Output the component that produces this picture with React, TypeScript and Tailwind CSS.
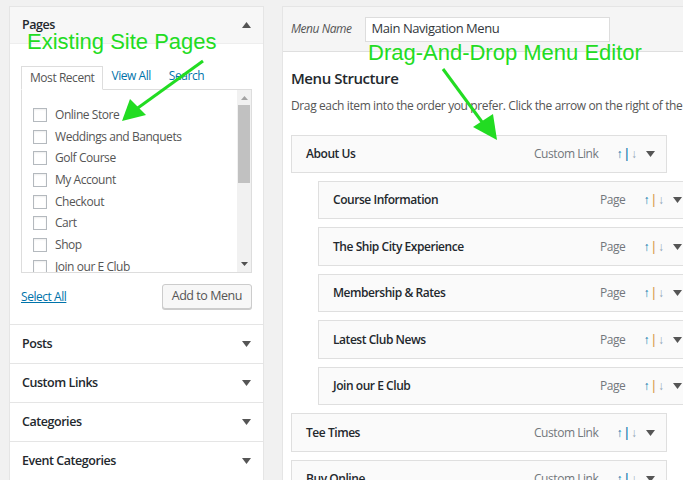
import React from 'react';

const pages = [
  'Online Store',
  'Weddings and Banquets',
  'Golf Course',
  'My Account',
  'Checkout',
  'Cart',
  'Shop',
  'Join our E Club',
];

const sections = ['Posts', 'Custom Links', 'Categories', 'Event Categories'];

interface MenuItemProps {
  title: string;
  kind: string;
  sub?: boolean;
}

function Caret({ up = false }: { up?: boolean }) {
  return (
    <svg width="9" height="6" viewBox="0 0 9 6" className="shrink-0">
      {up ? <polygon points="0,6 9,6 4.5,0" fill="#555" /> : <polygon points="0,0 9,0 4.5,6" fill="#555" />}
    </svg>
  );
}

function MenuItem({ title, kind, sub = false }: MenuItemProps) {
  return (
    <div
      className={`flex items-center h-[38.3px] w-[376px] shrink-0 bg-[#fafafa] border border-[#dfdfdf] pl-[14px] pr-[11px] ${
        sub ? 'ml-[27px]' : ''
      }`}
    >
      <span className="flex-1 text-[12px] font-semibold text-[#23282d]">{title}</span>
      <span className="text-[12px] text-[#72777c]">{kind}</span>
      <span className="ml-[18px] text-[12px] flex items-center tracking-normal">
        <span className="text-[#0073aa]">↑</span>
        <span className={sub ? 'text-[#d69a4c] font-semibold mx-[1px]' : 'text-[#0073aa] font-semibold mx-[1px]'}>|</span>
        <span className="text-[#8fa5b8]">↓</span>
      </span>
      <span className="ml-[9px]">
        <Caret />
      </span>
    </div>
  );
}

export default function App() {
  return (
    <div className="relative w-[683px] h-[480px] overflow-hidden bg-[#f1f1f1] font-['Open_Sans',sans-serif] tracking-[-0.45px] flex items-start">
      {/* left column */}
      <div className="ml-[9px] mt-[6px] w-[255px] shrink-0">
        <div className="border border-[#e5e5e5] bg-white">
          <div className="h-[37px] flex items-center justify-between pl-[12px] pr-[12px] bg-[#f7f7f7] border-b border-[#eeeeee]">
            <span className="text-[12.5px] font-semibold text-[#23282d]">Pages</span>
            <Caret up />
          </div>
          <div className="pt-[22px] pb-[15px] px-[11px]">
            <div className="flex items-end text-[12px] h-[23px]">
              <div className="h-[24px] px-[8px] flex items-center border border-[#dddddd] border-b-white bg-white text-[#555] relative top-[1px]">
                Most Recent
              </div>
              <span className="ml-[8px] mb-[4px] text-[#0073aa]">View All</span>
              <span className="ml-[18px] mb-[4px] text-[#0073aa]">Search</span>
            </div>
            <div className="h-[184px] border border-[#dddddd] flex">
              <div className="flex-1 overflow-hidden pt-[14px] pl-[11px]">
                {pages.map((p) => (
                  <div key={p} className="h-[21.7px] flex items-center">
                    <span className="w-[14px] h-[14px] border border-[#b4b9be] bg-white shadow-[inset_0_1px_2px_rgba(0,0,0,0.07)] shrink-0" />
                    <span className="ml-[8px] text-[12px] text-[#555]">{p}</span>
                  </div>
                ))}
              </div>
              <div className="w-[14px] bg-[#f1f1f1] flex flex-col items-center">
                <svg width="7" height="4" viewBox="0 0 7 4" className="mt-[6px]">
                  <polygon points="0,4 7,4 3.5,0" fill="#a3a3a3" />
                </svg>
                <div className="mt-[5px] w-[12px] h-[78px] bg-[#c1c1c1]" />
                <svg width="7" height="4" viewBox="0 0 7 4" className="mt-auto mb-[6px]">
                  <polygon points="0,0 7,0 3.5,4" fill="#505050" />
                </svg>
              </div>
            </div>
            <div className="mt-[11px] flex items-center justify-between">
              <span className="text-[12px] text-[#0073aa] underline">Select All</span>
              <span className="h-[25px] px-[9px] flex items-center border border-[#cccccc] bg-[#f7f7f7] rounded-[3px] shadow-[0_1px_0_#cccccc] text-[12.5px] text-[#555]">
                Add to Menu
              </span>
            </div>
          </div>
        </div>
        {sections.map((s) => (
          <div
            key={s}
            className="h-[39px] border border-t-0 border-[#e5e5e5] bg-white flex items-center justify-between pl-[12px] pr-[12px]"
          >
            <span className="text-[12.5px] font-semibold text-[#23282d]">{s}</span>
            <Caret />
          </div>
        ))}
      </div>

      {/* right panel */}
      <div className="ml-[18px] mt-[6px] w-[420px] shrink-0 border border-[#e5e5e5] bg-white">
        <div className="h-[45px] bg-[#f5f5f5] border-b border-[#dfdfdf] flex items-center pl-[8px]">
          <span className="text-[12px] italic text-[#555]">Menu Name</span>
          <span className="ml-[13px] w-[245px] h-[25px] border border-[#dddddd] bg-white flex items-center pl-[6px] text-[13px] text-[#32373c]">
            Main Navigation Menu
          </span>
        </div>
        <div className="pl-[8px] pt-[15px]">
          <div className="text-[15px] font-semibold text-[#23282d]">Menu Structure</div>
          <div className="mt-[7px] text-[12px] text-[#555] whitespace-nowrap tracking-[-0.38px]">
            Drag each item into the order you prefer. Click the arrow on the right of the item to reveal additional configuration options.
          </div>
          <div className="mt-[20px] flex flex-col gap-[8.2px]">
            <MenuItem title="About Us" kind="Custom Link" />
            <MenuItem title="Course Information" kind="Page" sub />
            <MenuItem title="The Ship City Experience" kind="Page" sub />
            <MenuItem title="Membership & Rates" kind="Page" sub />
            <MenuItem title="Latest Club News" kind="Page" sub />
            <MenuItem title="Join our E Club" kind="Page" sub />
            <MenuItem title="Tee Times" kind="Custom Link" />
            <MenuItem title="Buy Online" kind="Custom Link" />
          </div>
        </div>
      </div>

      {/* annotations */}
      <div className="absolute left-[27px] top-[28px] text-[22px] leading-[28px] tracking-normal text-[#22dc22] font-['Liberation_Sans',Arial,sans-serif]">
        Existing Site Pages
      </div>
      <div className="absolute left-[368px] top-[39px] text-[22px] leading-[28px] tracking-normal text-[#22dc22] font-['Liberation_Sans',Arial,sans-serif]">
        Drag-And-Drop Menu Editor
      </div>
      <svg className="absolute left-0 top-0 pointer-events-none" width="683" height="480" viewBox="0 0 683 480">
        <line x1="203" y1="61" x2="135" y2="110" stroke="#22dc22" strokeWidth="3" />
        <polygon points="122,121 130,99 146,115" fill="#22dc22" />
        <line x1="443" y1="69" x2="485" y2="126" stroke="#22dc22" strokeWidth="3" />
        <polygon points="497,140 473,127 493,114" fill="#22dc22" />
      </svg>
    </div>
  );
}
